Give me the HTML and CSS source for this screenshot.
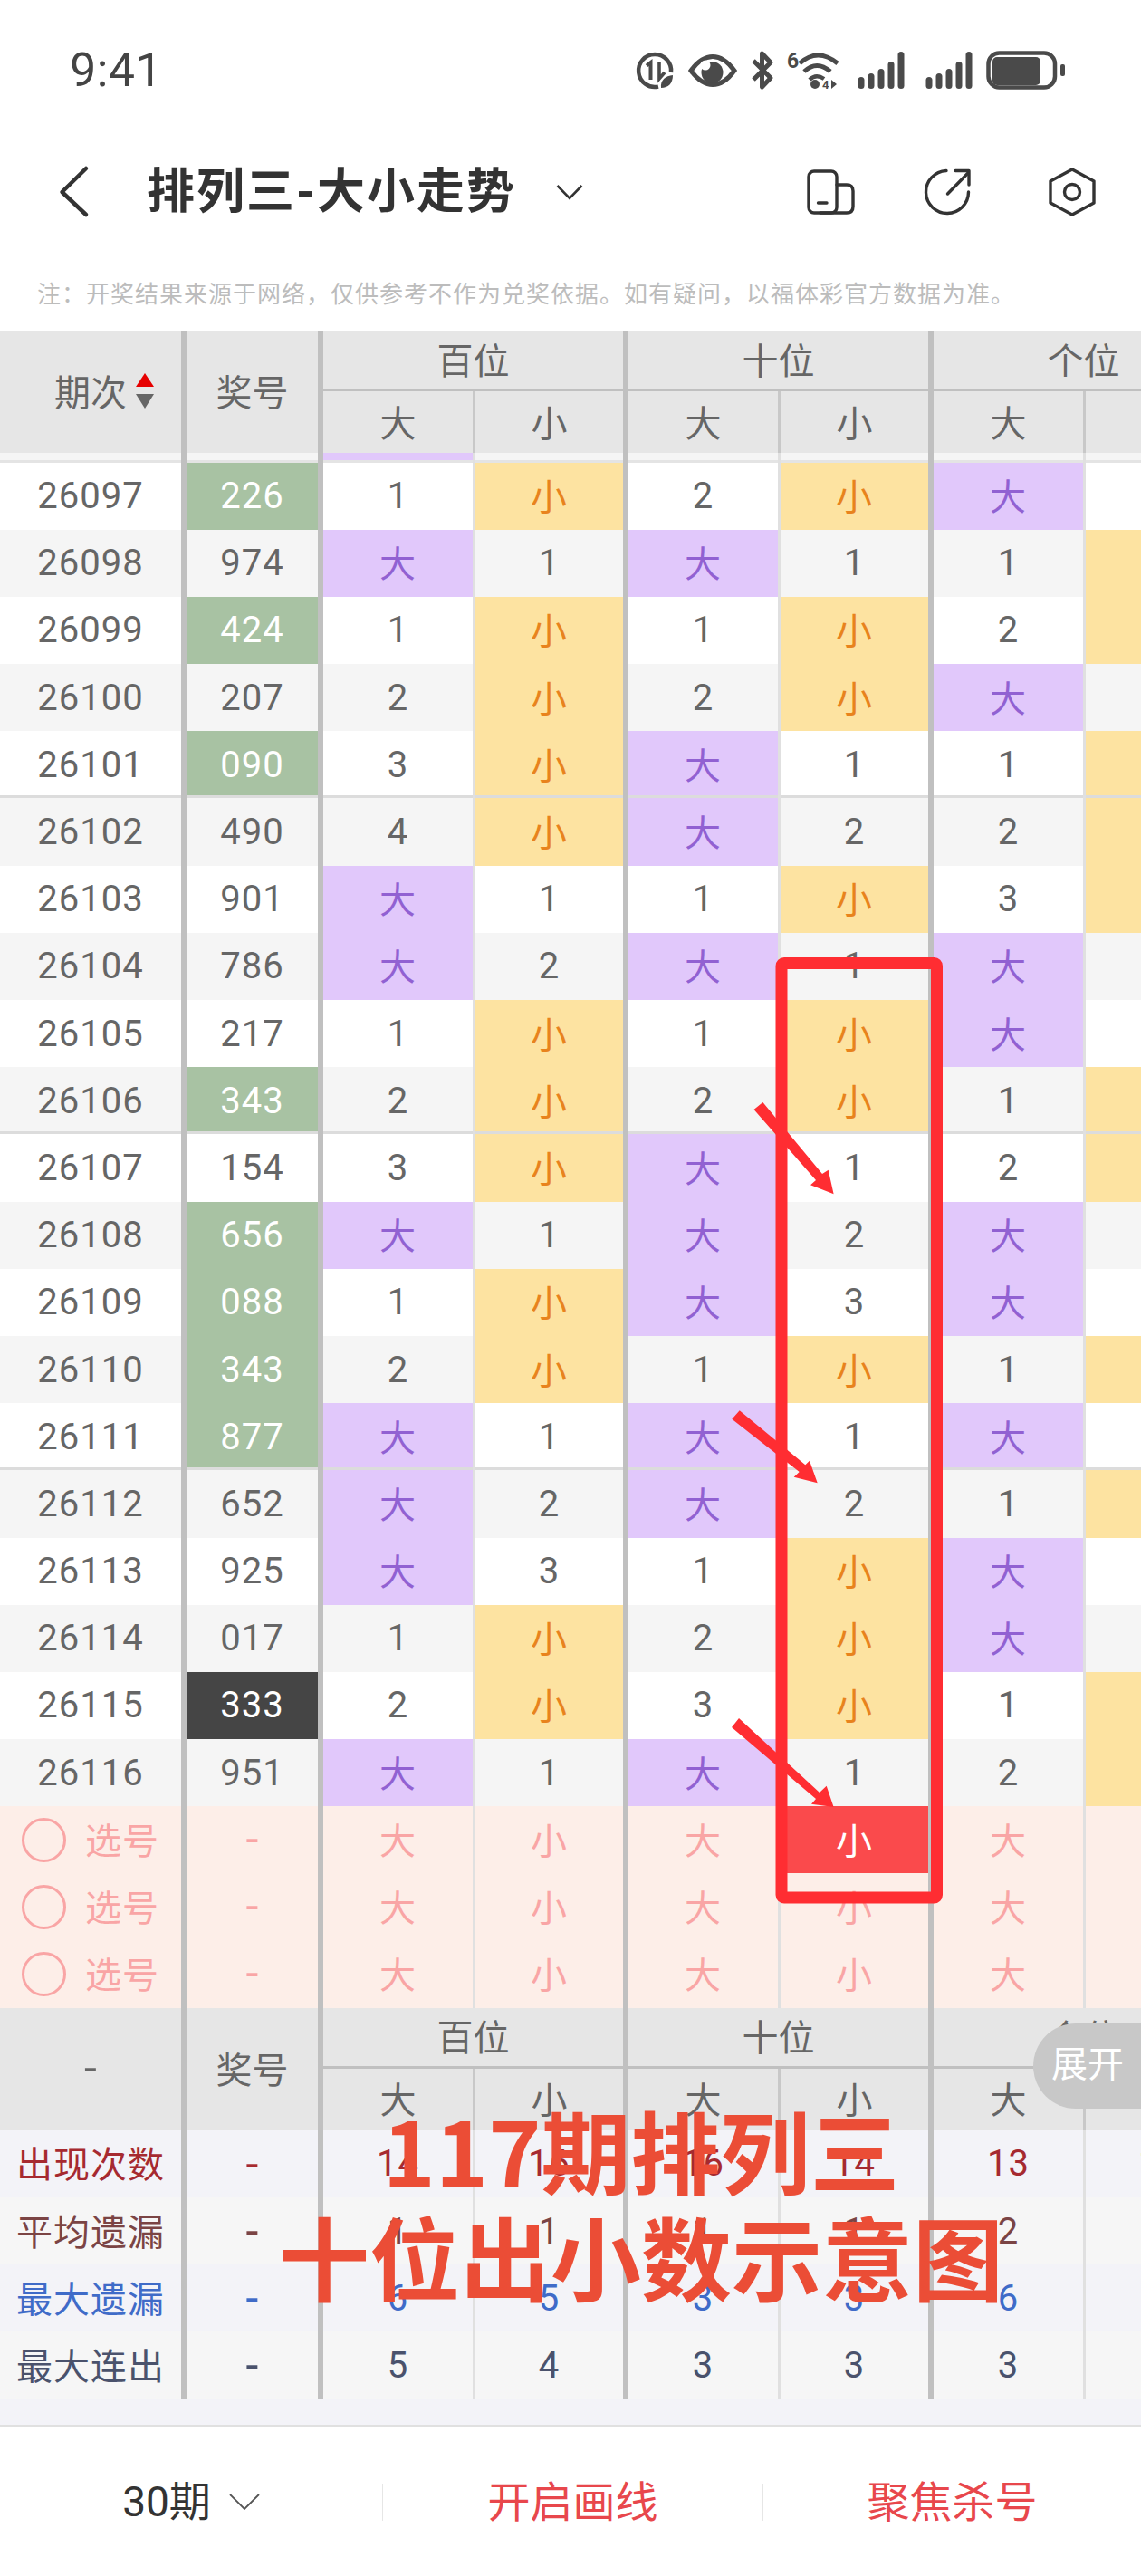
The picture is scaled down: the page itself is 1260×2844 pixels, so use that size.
FILE: index.html
```html
<!DOCTYPE html>
<html lang="zh-CN">
<head>
<meta charset="utf-8">
<title>排列三-大小走势</title>
<link rel="stylesheet" href="styles.css">
</head>
<body>
<div class="page">
  <header class="top">
    <div class="status">
      <span class="time">9:41</span>
      <svg class="status-icons" viewBox="700 50 480 56" width="480" height="56">
        <g fill="none" stroke="#4a4a4a" stroke-width="4.5">
          <path d="M741 80A18 18 0 1 0 727 95.6"/>
          <path d="M714 72.5L718.5 69V88" stroke-width="4"/>
          <path d="M728 68V87L734 80" stroke-width="3.6"/>
          <path d="M763 78C771 67 778 62.5 787 62.5C796 62.5 803 67 811 78C803 89 796 93.5 787 93.5C778 93.5 771 89 763 78Z" stroke-width="5"/>
          <path d="M832 67L851 86L841.5 96V59L851 69L832 88" stroke-width="5" stroke-linejoin="round"/>
          <path d="M883 70Q903 52 925 70" stroke-width="5"/>
          <path d="M888 79Q902 66 917 79" stroke-width="5"/>
          <path d="M894 88Q901 81 910 87" stroke-width="4.5"/>
          <rect x="1091.5" y="58.5" width="73.500" height="38" rx="12"/>
        </g>
        <g fill="#4a4a4a">
          <path d="M730 97C729 88 735 84 743 83C743 92 738 97 730 97Z"/>
          <circle cx="786.500" cy="80" r="12"/>
          <circle cx="779" cy="72" r="5.500" fill="#fff"/>
          <text class="tiny-six" x="869" y="75">6</text>
          <circle cx="900" cy="93" r="5"/>
          <text class="tiny-four" x="908" y="98">4</text>
          <path d="M918 88L924 93L918 98Z"/>
          <rect x="947.500" y="85" width="7" height="13" rx="3.500"/>
          <rect x="958.500" y="81" width="7" height="17" rx="3.500"/>
          <rect x="969.500" y="76" width="7" height="22" rx="3.500"/>
          <rect x="980.500" y="68" width="7" height="30" rx="3.500"/>
          <rect x="991.500" y="57" width="7" height="41" rx="3.500"/>
          <rect x="1022.500" y="85" width="7" height="13" rx="3.500"/>
          <rect x="1033.500" y="81" width="7" height="17" rx="3.500"/>
          <rect x="1044.500" y="76" width="7" height="22" rx="3.500"/>
          <rect x="1055.500" y="68" width="7" height="30" rx="3.500"/>
          <rect x="1066.500" y="57" width="7" height="41" rx="3.500"/>
          <rect x="1096" y="63" width="53" height="31" rx="5"/>
          <rect x="1171" y="71" width="5" height="13" rx="2"/>
        </g>
      </svg>
    </div>
    <nav class="nav">
      <svg class="back" viewBox="60 177 40 70" width="40" height="70"><path d="M95 186L68.500 212L95 237" fill="none" stroke="#333" stroke-width="4.500" stroke-linecap="round" stroke-linejoin="round"/></svg>
      <h1 class="title">排列三-大小走势</h1>
      <svg class="drop" viewBox="0 0 30 18" width="30" height="18"><path d="M1.500 2L15 16L28.500 2" fill="none" stroke="#333" stroke-width="2.600"/></svg>
      <svg class="act act-phone" viewBox="886 182 60 60" width="60" height="60">
        <g fill="none" stroke="#333" stroke-width="3.400" stroke-linecap="round" stroke-linejoin="round">
          <rect x="892" y="189" width="31" height="46" rx="6"/>
          <path d="M923 204H934Q941 204 941 211V228Q941 235 934 235H905"/>
          <path d="M902.500 224H912"/>
        </g>
      </svg>
      <svg class="act act-share" viewBox="1015 182 60 60" width="60" height="60">
        <g fill="none" stroke="#333" stroke-width="3.400" stroke-linecap="round" stroke-linejoin="round">
          <path d="M1044 188.500A23.500 23.500 0 1 0 1068.500 212"/>
          <path d="M1045.500 214L1068 191"/>
          <path d="M1054 188.500H1069V204"/>
        </g>
      </svg>
      <svg class="act act-set" viewBox="1152 182 60 60" width="60" height="60">
        <g fill="none" stroke="#333" stroke-width="3.400" stroke-linejoin="round">
          <path d="M1182 187L1206 200V224L1182 237L1158 224V200Z"/>
          <circle cx="1182" cy="212" r="8.500"/>
        </g>
      </svg>
    </nav>
    <p class="note">注：开奖结果来源于网络，仅供参考不作为兑奖依据。如有疑问，以福体彩官方数据为准。</p>
  </header>

  <main class="table">
    <div class="head">
      <div class="hcell h-id h-sortable">期次<span class="sort"><i class="up"></i><i class="down"></i></span></div>
      <div class="hcell h-num">奖号</div>
      <div class="hcell group">百位</div>
      <div class="hcell group">十位</div>
      <div class="hcell group">个位</div>
      <div class="hcell sub thick">大</div><div class="hcell sub thin">小</div>
      <div class="hcell sub thick">大</div><div class="hcell sub thin">小</div>
      <div class="hcell sub thick">大</div><div class="hcell sub thin">小</div>
    </div>

    <div class="row peek"><div></div><div></div><div class="p"></div><div></div><div></div><div></div><div></div><div></div></div>

    <div class="rows">
      <div class="row"><div>26097</div><div class="g">226</div><div>1</div><div class="y">小</div><div>2</div><div class="y">小</div><div class="p">大</div><div>1</div></div>
      <div class="row"><div>26098</div><div>974</div><div class="p">大</div><div>1</div><div class="p">大</div><div>1</div><div>1</div><div class="y">小</div></div>
      <div class="row"><div>26099</div><div class="g">424</div><div>1</div><div class="y">小</div><div>1</div><div class="y">小</div><div>2</div><div class="y">小</div></div>
      <div class="row"><div>26100</div><div>207</div><div>2</div><div class="y">小</div><div>2</div><div class="y">小</div><div class="p">大</div><div>1</div></div>
      <div class="row end"><div>26101</div><div class="g">090</div><div>3</div><div class="y">小</div><div class="p">大</div><div>1</div><div>1</div><div class="y">小</div></div>
      <div class="row"><div>26102</div><div>490</div><div>4</div><div class="y">小</div><div class="p">大</div><div>2</div><div>2</div><div class="y">小</div></div>
      <div class="row"><div>26103</div><div>901</div><div class="p">大</div><div>1</div><div>1</div><div class="y">小</div><div>3</div><div class="y">小</div></div>
      <div class="row"><div>26104</div><div>786</div><div class="p">大</div><div>2</div><div class="p">大</div><div>1</div><div class="p">大</div><div>1</div></div>
      <div class="row"><div>26105</div><div>217</div><div>1</div><div class="y">小</div><div>1</div><div class="y">小</div><div class="p">大</div><div>2</div></div>
      <div class="row end"><div>26106</div><div class="g">343</div><div>2</div><div class="y">小</div><div>2</div><div class="y">小</div><div>1</div><div class="y">小</div></div>
      <div class="row"><div>26107</div><div>154</div><div>3</div><div class="y">小</div><div class="p">大</div><div>1</div><div>2</div><div class="y">小</div></div>
      <div class="row"><div>26108</div><div class="g">656</div><div class="p">大</div><div>1</div><div class="p">大</div><div>2</div><div class="p">大</div><div>1</div></div>
      <div class="row"><div>26109</div><div class="g">088</div><div>1</div><div class="y">小</div><div class="p">大</div><div>3</div><div class="p">大</div><div>2</div></div>
      <div class="row"><div>26110</div><div class="g">343</div><div>2</div><div class="y">小</div><div>1</div><div class="y">小</div><div>1</div><div class="y">小</div></div>
      <div class="row end"><div>26111</div><div class="g">877</div><div class="p">大</div><div>1</div><div class="p">大</div><div>1</div><div class="p">大</div><div>1</div></div>
      <div class="row"><div>26112</div><div>652</div><div class="p">大</div><div>2</div><div class="p">大</div><div>2</div><div>1</div><div class="y">小</div></div>
      <div class="row"><div>26113</div><div>925</div><div class="p">大</div><div>3</div><div>1</div><div class="y">小</div><div class="p">大</div><div>1</div></div>
      <div class="row"><div>26114</div><div>017</div><div>1</div><div class="y">小</div><div>2</div><div class="y">小</div><div class="p">大</div><div>2</div></div>
      <div class="row"><div>26115</div><div class="k">333</div><div>2</div><div class="y">小</div><div>3</div><div class="y">小</div><div>1</div><div class="y">小</div></div>
      <div class="row"><div>26116</div><div>951</div><div class="p">大</div><div>1</div><div class="p">大</div><div>1</div><div>2</div><div class="y">小</div></div>
    </div>

    <div class="row pick"><div class="pick-cell"><span class="ring"></span>选号</div><div class="d">-</div><div>大</div><div>小</div><div>大</div><div class="hit">小</div><div>大</div><div>小</div></div>
    <div class="row pick"><div class="pick-cell"><span class="ring"></span>选号</div><div class="d">-</div><div>大</div><div>小</div><div>大</div><div>小</div><div>大</div><div>小</div></div>
    <div class="row pick"><div class="pick-cell"><span class="ring"></span>选号</div><div class="d">-</div><div>大</div><div>小</div><div>大</div><div>小</div><div>大</div><div>小</div></div>

    <div class="head">
      <div class="hcell h-id h-dash">-</div>
      <div class="hcell h-num">奖号</div>
      <div class="hcell group">百位</div>
      <div class="hcell group">十位</div>
      <div class="hcell group">个位</div>
      <div class="hcell sub thick">大</div><div class="hcell sub thin">小</div>
      <div class="hcell sub thick">大</div><div class="hcell sub thin">小</div>
      <div class="hcell sub thick">大</div><div class="hcell sub thin">小</div>
    </div>

    <div class="row stat s-red"><div class="label">出现次数</div><div class="d">-</div><div>14</div><div>16</div><div>16</div><div>14</div><div>13</div><div>17</div></div>
    <div class="row stat s-brown"><div class="label">平均遗漏</div><div class="d">-</div><div>1</div><div>1</div><div>1</div><div>1</div><div>2</div><div>1</div></div>
    <div class="row stat s-blue"><div class="label">最大遗漏</div><div class="d">-</div><div>6</div><div>5</div><div>3</div><div>3</div><div>6</div><div>3</div></div>
    <div class="row stat s-slate"><div class="label">最大连出</div><div class="d">-</div><div>5</div><div>4</div><div>3</div><div>3</div><div>3</div><div>5</div></div>
    <div class="table-foot"></div>
  </main>

  <footer class="bar">
    <div class="bar-item period">30期<svg class="bar-chev" viewBox="0 0 34 18" width="34" height="18"><path d="M1 1L17 17L33 1" fill="none" stroke="#555" stroke-width="1.800"/></svg></div>
    <div class="bar-item red">开启画线</div>
    <div class="bar-item red">聚焦杀号</div>
  </footer>

  <div class="expand">展开</div>

  <svg class="annot" viewBox="0 0 1260 2844" width="1260" height="2844">
    <rect x="863" y="1063.500" width="171.500" height="1031.500" rx="3" fill="none" stroke="#ff2d32" stroke-width="13"/>
    <g fill="#ff2d32">
      <polygon points="832.500,1225 842.400,1217 908,1296 914.700,1291.700 920.600,1318.300 895,1308.300 901,1303"/>
      <polygon points="808.300,1566.700 816.700,1557.300 889.300,1617.300 894,1612.700 902.700,1637.300 876.700,1630.700 882.700,1625"/>
      <polygon points="808,1907 816,1897 905,1979 912.700,1971.700 920.600,1995 896,1991.700 901,1986"/>
    </g>
  </svg>

  <div class="caption">
    <div class="cap-one">117期排列三</div>
    <div>十位出小数示意图</div>
  </div>
</div>
</body>
</html>
```

FILE: styles.css
```css
* { box-sizing: border-box; }

html, body { margin: 0; padding: 0; background: #fff; }

.page {
  position: relative;
  width: 1260px;
  height: 2844px;
  overflow: hidden;
  font-family: Roboto, "Noto Sans CJK SC", sans-serif;
  color: #666;
}

/* top area */
.top { height: 365px; padding-top: 50px; background: #fff; }

.status { display: flex; align-items: center; justify-content: space-between; height: 56px; }
.time { margin-left: 77px; font-size: 52px; line-height: 56px; color: #444; letter-spacing: .5px; }
.status-icons { display: block; margin-right: 80px; }
.tiny-six { font: 700 23px Roboto, sans-serif; }
.tiny-four { font: 700 13px Roboto, sans-serif; }

.nav { display: flex; align-items: center; height: 90px; margin-top: 61px; }
.back { display: block; margin-left: 60px; }
.title {
  margin: 0 0 0 62px;
  font-size: 53px;
  line-height: 70px;
  font-weight: 700;
  letter-spacing: 2px;
  color: #333;
}
.drop { display: block; margin-left: 44px; }
.act { display: block; }
.act-phone { margin-left: 243px; }
.act-share { margin-left: 69px; }
.act-set { margin-left: 78px; }

.note {
  margin: 51px 0 0 41px;
  font-size: 26px;
  line-height: 34px;
  letter-spacing: 1px;
  color: #bcbcbc;
  white-space: nowrap;
}

/* table */
.table { background: #f3f3f8; overflow: hidden; height: 2312px; }

.head {
  display: grid;
  grid-template-columns: 200px 151px 171px 166px 171px 166px 171px 166px;
  grid-template-rows: 67px 68px;
  width: 1362px;
  background: #e6e6e6;
  font-size: 40px;
}
.hcell { display: flex; align-items: center; justify-content: center; color: #666; padding-bottom: 3px; }
.h-id { grid-row: 1 / 3; }
.h-sortable { padding-left: 30px; }
.h-dash { font-size: 50px; }
.h-num { grid-row: 1 / 3; border-left: 6px solid #c0c0c0; border-right: 0; }
.group { grid-column: span 2; border-left: 6px solid #c0c0c0; border-bottom: 3px solid #c0c0c0; }
.sub.thick { border-left: 6px solid #c0c0c0; }
.sub.thin { border-left: 3px solid #c8c8c8; }

.sort { display: flex; flex-direction: column; gap: 8px; margin-left: 10px; }
.sort i { display: block; width: 0; height: 0; border-left: 10px solid transparent; border-right: 10px solid transparent; }
.sort .up { border-bottom: 15px solid #e60000; }
.sort .down { border-top: 16px solid #666; }

.row {
  display: grid;
  grid-template-columns: 200px 151px 171px 166px 171px 166px 171px 166px;
  width: 1362px;
  height: 74.2px;
  font-size: 40px;
  letter-spacing: 1px;
}
.row > div { display: flex; align-items: center; justify-content: center; border-left: 3px solid #e0e0e0; }
.row > div:first-child { border-left: 0; }
.row > div:nth-child(2),
.row > div:nth-child(3),
.row > div:nth-child(5),
.row > div:nth-child(7) { border-left: 6px solid #c0c0c0; }
.row > .d { font-size: 50px; letter-spacing: 0; }

.peek { height: 10.5px; background: #f5f5f5; }
.peek > div { box-shadow: inset 0 -3px 0 #e4e4e4; }

.rows .row:nth-child(odd) { background: #fff; }
.rows .row:nth-child(even) { background: #f5f5f5; }
.row.end > div { box-shadow: inset 0 -3px 0 #dcdcdc; }

.row > .p { background: #e1c8fb; color: #9161d2; padding-bottom: 3px; }
.row > .y { background: #fde3a1; color: #e8831d; padding-bottom: 3px; }
.g { background: #a8c2a3; color: #fff; }
.k { background: #454545; color: #fff; }

.pick { background: #fdeee8; color: #f9a5a5; }
.pick > div { padding-bottom: 3px; }
.pick-cell { gap: 21px; }
.ring { display: block; width: 49px; height: 49px; margin-top: 3px; border: 3px solid #f9a5a5; border-radius: 50%; }
.pick .hit { background: #fa4a4c; color: #fff; }

.stat > div { background: transparent; }
.stat > .label { padding-bottom: 3px; }
.s-red { background: #f3f3f8; color: #a62a30; }
.s-brown { background: #f6f6f6; color: #7b4444; }
.s-blue { background: #f3f3f8; color: #3f6bc8; }
.s-slate { background: #f6f6f6; color: #4a526c; }
.table-foot { height: 28px; background: #f3f3f8; }

/* bottom bar */
.bar {
  display: grid;
  grid-template-columns: 422px 420px 418px;
  align-items: center;
  height: 167px;
  background: #fff;
  border-top: 3px solid #e0e0e0;
  font-size: 47px;
}
.bar-item { display: flex; align-items: center; justify-content: center; height: 41px; line-height: 41px; border-left: 1px solid #e6e6e6; }
.bar-item:first-child { border-left: 0; }
.period { color: #333; font-size: 46px; gap: 20px; }
.bar-chev { display: block; }
.red { color: #e8474c; }

/* overlays */
.expand {
  position: absolute;
  top: 2234px;
  left: 1141px;
  width: 119px;
  height: 94px;
  padding-left: 20px;
  border-radius: 47px 0 0 47px;
  background: #c8c8c8;
  color: #fff;
  font-size: 40px;
  line-height: 91px;
}
.annot { position: absolute; top: 0; left: 0; }
.caption {
  position: absolute;
  top: 2314px;
  left: 0;
  width: 1416px;
  text-align: center;
  font-family: "Noto Sans CJK SC", sans-serif;
  font-size: 100px;
  line-height: 117px;
  font-weight: 700;
  color: #eb4d36;
}
.cap-one { font-size: 99px; }
```
